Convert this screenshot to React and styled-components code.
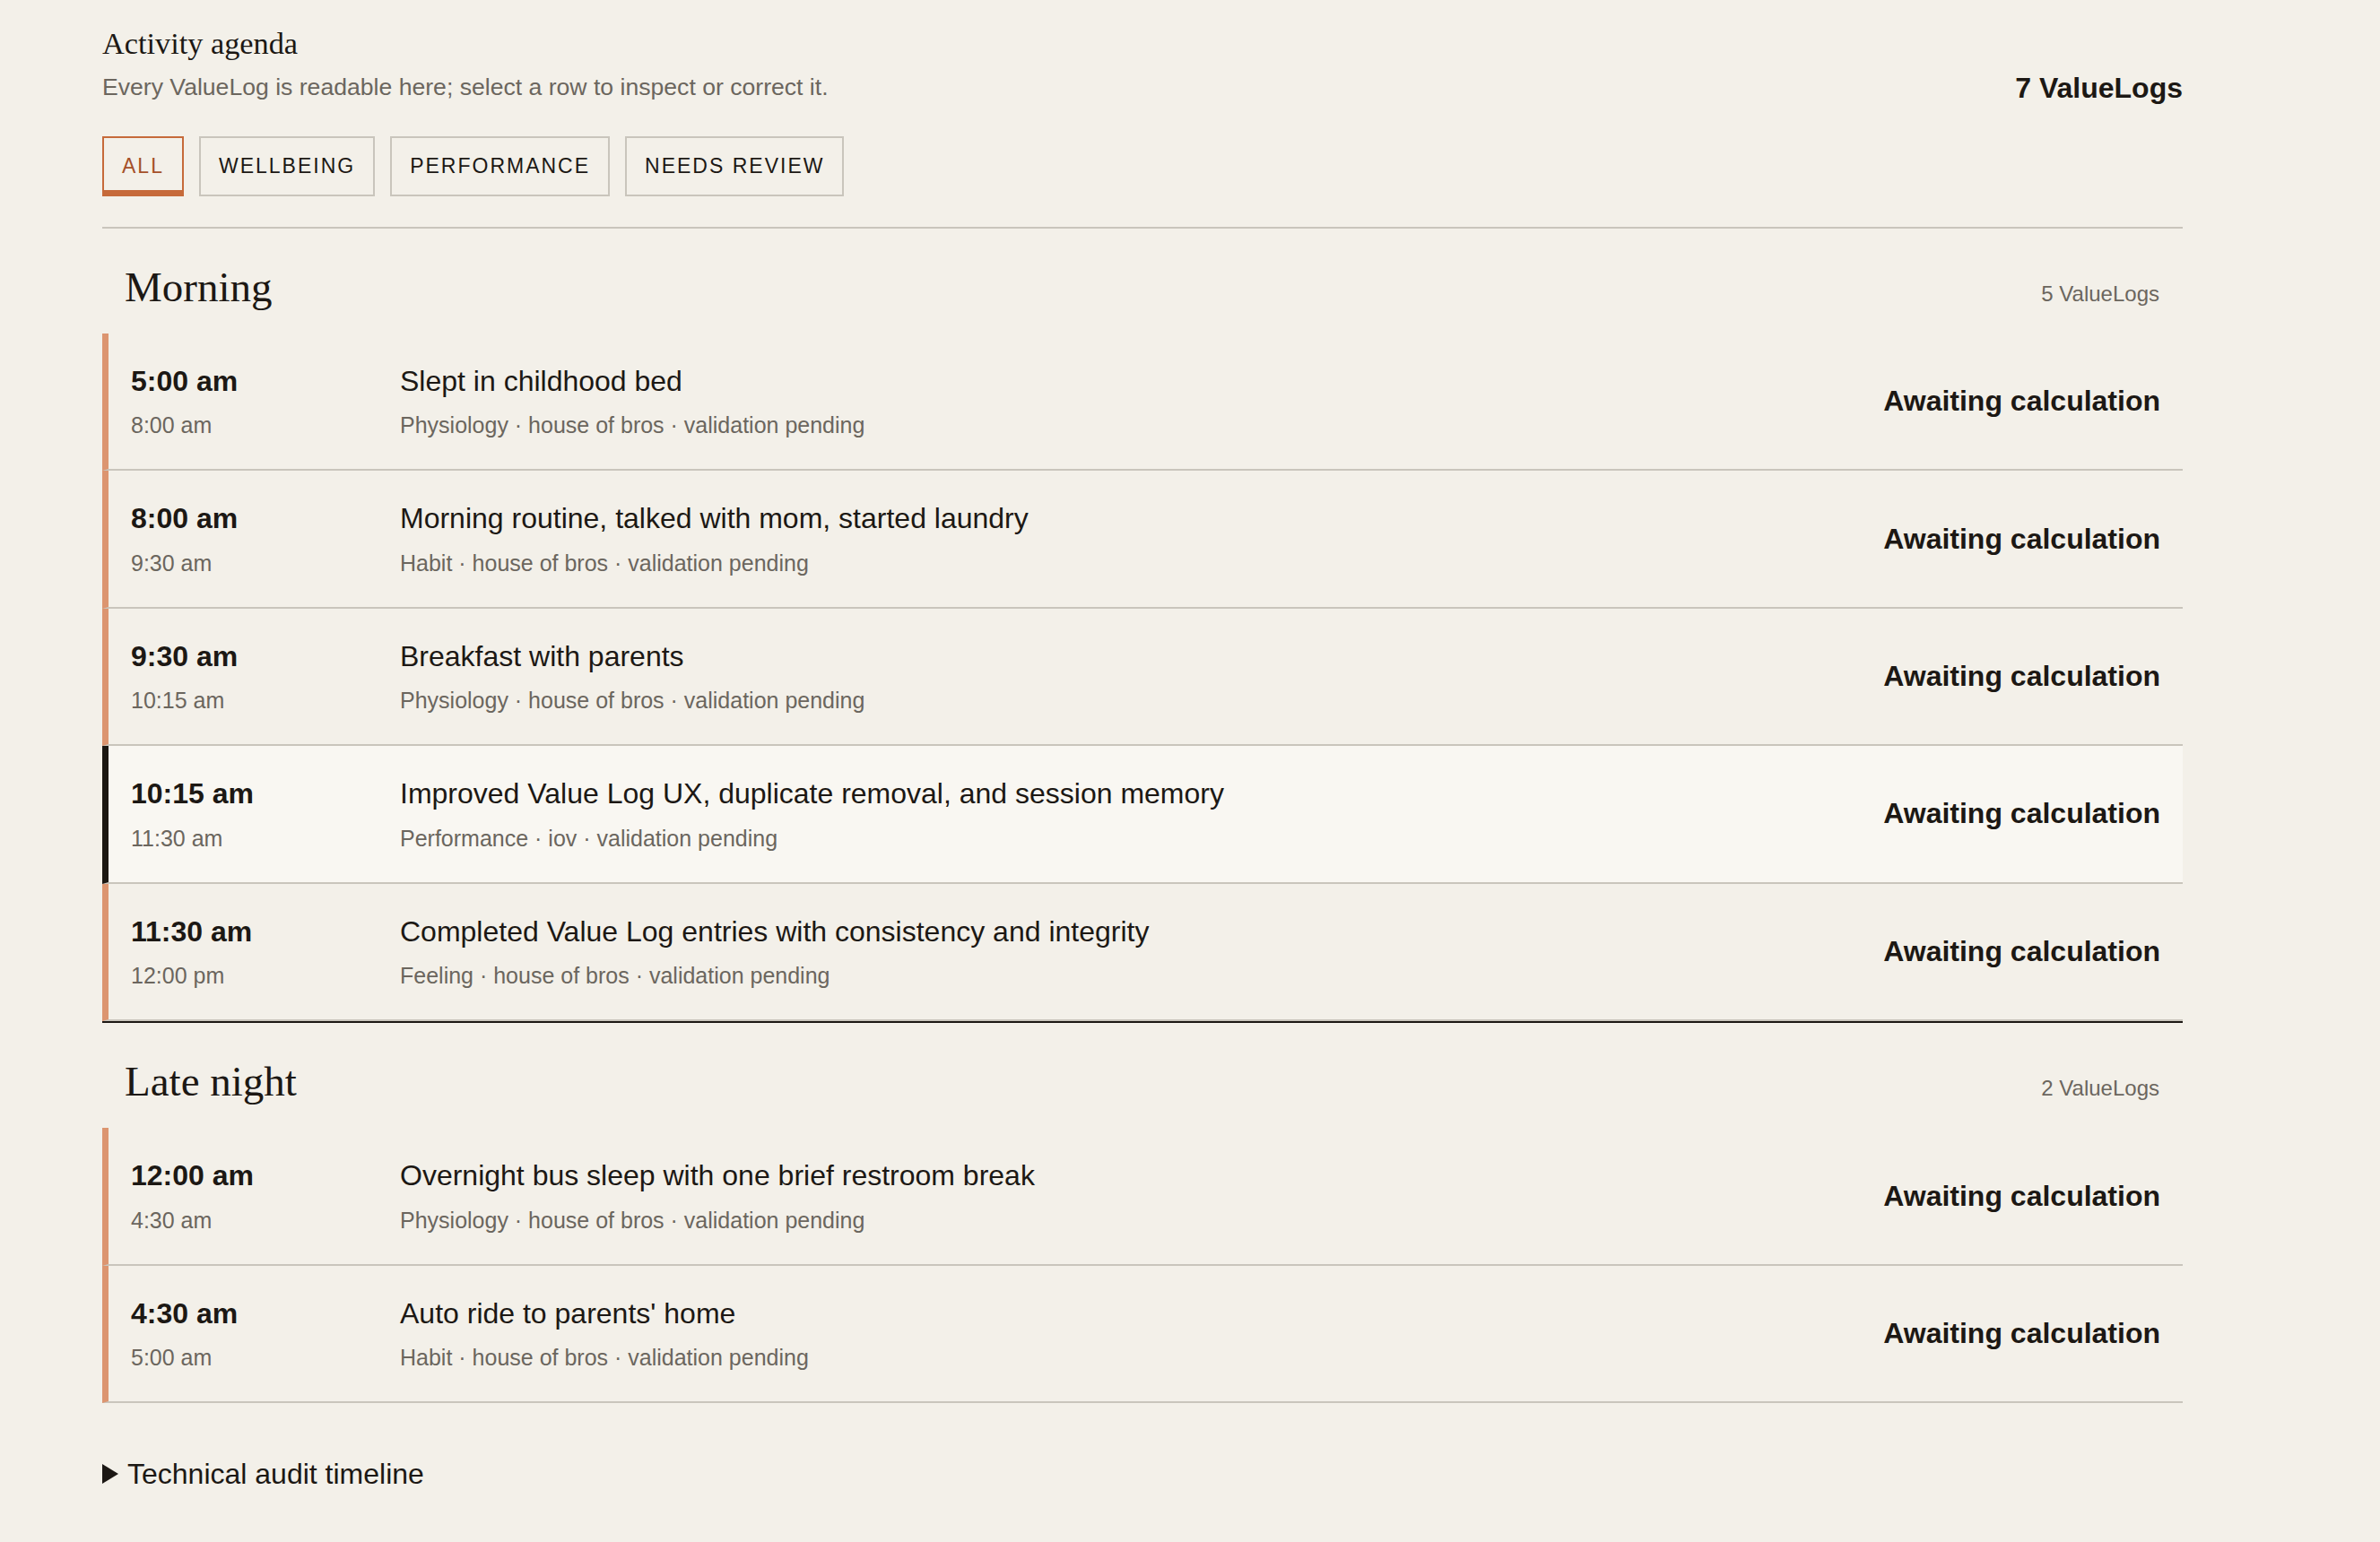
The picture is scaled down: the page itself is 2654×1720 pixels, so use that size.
import React from "react";
import styled, { createGlobalStyle } from "styled-components";

const Global = createGlobalStyle`
  html, body { margin: 0; padding: 0; background: #f3f0e9; }
  body { font-family: "Liberation Sans", Arial, sans-serif; color: #1c1814; }
  * { box-sizing: border-box; }
`;

const Page = styled.main`
  padding: 28px 220px 40px 114px;
  min-height: 1720px;
`;

const Header = styled.header`
  display: flex;
  justify-content: space-between;
  align-items: flex-end;
`;

const HeadText = styled.div`
  display: flex;
  flex-direction: column;
  gap: 13px;
`;

const Title = styled.h1`
  margin: 0;
  font-family: "Liberation Serif", "Times New Roman", serif;
  font-weight: 400;
  font-size: 34.3px;
  line-height: 1.2;
  color: #1c1814;
`;

const Subtitle = styled.p`
  margin: 0;
  font-size: 26.6px;
  line-height: 1.2;
  color: #6b665e;
`;

const TotalCount = styled.div`
  font-size: 32px;
  line-height: 1;
  font-weight: 700;
  color: #1c1814;
`;

const Toolbar = styled.div`
  display: flex;
  gap: 17px;
  margin-top: 38px;
  padding-bottom: 34px;
  border-bottom: 2px solid #c9c5bc;
`;

const Tab = styled.button`
  font-family: "Liberation Sans", Arial, sans-serif;
  font-size: 23px;
  line-height: 1.2;
  letter-spacing: 2px;
  text-transform: uppercase;
  padding: 17.5px 20px;
  background: transparent;
  border: 2px solid ${(p) => (p.$active ? "#c66a3a" : "#c9c5bc")};
  box-shadow: ${(p) => (p.$active ? "inset 0 -5px 0 #c66a3a" : "none")};
  color: ${(p) => (p.$active ? "#a5502a" : "#1c1814")};
  cursor: pointer;
`;

const Group = styled.section`
  border-bottom: ${(p) => (p.$last ? "none" : "2px solid #1c1814")};
`;

const GroupHeader = styled.div`
  display: flex;
  justify-content: space-between;
  align-items: baseline;
  padding: 37px 26px 24px 25px;
`;

const GroupTitle = styled.h2`
  margin: 0;
  font-family: "Liberation Serif", "Times New Roman", serif;
  font-weight: 400;
  font-size: 47px;
  line-height: 1.2;
  color: #1c1814;
`;

const GroupCount = styled.span`
  font-size: 24px;
  color: #6b665e;
`;

const Row = styled.div`
  display: grid;
  grid-template-columns: 300px 1fr auto;
  align-items: center;
  padding: 34px 25px 34px 25px;
  border-left: 7px solid ${(p) => (p.$selected ? "#1b1712" : "#dc9570")};
  border-bottom: 2px solid #c9c5bc;
  background: ${(p) => (p.$selected ? "#f9f7f2" : "transparent")};
  cursor: pointer;
`;

const Stack = styled.div`
  display: flex;
  flex-direction: column;
  gap: 15px;
`;

const Start = styled.div`
  font-size: 32px;
  line-height: 1.2;
  font-weight: 700;
  color: #1c1814;
`;

const Primary = styled.div`
  font-size: 32px;
  line-height: 1.2;
  color: #1c1814;
`;

const Secondary = styled.div`
  font-size: 25px;
  line-height: 1.2;
  color: #6b665e;
`;

const Status = styled.div`
  font-size: 32px;
  font-weight: 700;
  color: #1c1814;
  text-align: right;
`;

const Audit = styled.details`
  margin-top: 60px;
`;

const AuditSummary = styled.summary`
  list-style: none;
  display: flex;
  align-items: center;
  gap: 10px;
  font-size: 32px;
  line-height: 1.2;
  color: #1c1814;
  cursor: pointer;
  &::-webkit-details-marker { display: none; }
  &::before {
    content: "";
    width: 0;
    height: 0;
    border-left: 18px solid #1c1814;
    border-top: 11px solid transparent;
    border-bottom: 11px solid transparent;
  }
`;

const groups = [
  {
    name: "Morning",
    rows: [
      { start: "5:00 am", end: "8:00 am", title: "Slept in childhood bed", meta: "Physiology · house of bros · validation pending" },
      { start: "8:00 am", end: "9:30 am", title: "Morning routine, talked with mom, started laundry", meta: "Habit · house of bros · validation pending" },
      { start: "9:30 am", end: "10:15 am", title: "Breakfast with parents", meta: "Physiology · house of bros · validation pending" },
      { start: "10:15 am", end: "11:30 am", title: "Improved Value Log UX, duplicate removal, and session memory", meta: "Performance · iov · validation pending", selected: true },
      { start: "11:30 am", end: "12:00 pm", title: "Completed Value Log entries with consistency and integrity", meta: "Feeling · house of bros · validation pending" },
    ],
  },
  {
    name: "Late night",
    rows: [
      { start: "12:00 am", end: "4:30 am", title: "Overnight bus sleep with one brief restroom break", meta: "Physiology · house of bros · validation pending" },
      { start: "4:30 am", end: "5:00 am", title: "Auto ride to parents' home", meta: "Habit · house of bros · validation pending" },
    ],
  },
];

const tabs = ["All", "Wellbeing", "Performance", "Needs review"];

export default function App() {
  return (
    <>
      <Global />
      <Page>
        <Header>
          <HeadText>
            <Title>Activity agenda</Title>
            <Subtitle>Every ValueLog is readable here; select a row to inspect or correct it.</Subtitle>
          </HeadText>
          <TotalCount>7 ValueLogs</TotalCount>
        </Header>
        <Toolbar>
          {tabs.map((t, i) => (
            <Tab key={t} $active={i === 0}>{t}</Tab>
          ))}
        </Toolbar>
        {groups.map((g, gi) => (
          <Group key={g.name} $last={gi === groups.length - 1}>
            <GroupHeader>
              <GroupTitle>{g.name}</GroupTitle>
              <GroupCount>{g.rows.length} ValueLogs</GroupCount>
            </GroupHeader>
            {g.rows.map((r) => (
              <Row key={r.start} $selected={r.selected}>
                <Stack>
                  <Start>{r.start}</Start>
                  <Secondary>{r.end}</Secondary>
                </Stack>
                <Stack>
                  <Primary>{r.title}</Primary>
                  <Secondary>{r.meta}</Secondary>
                </Stack>
                <Status>Awaiting calculation</Status>
              </Row>
            ))}
          </Group>
        ))}
        <Audit>
          <AuditSummary>Technical audit timeline</AuditSummary>
        </Audit>
      </Page>
    </>
  );
}
